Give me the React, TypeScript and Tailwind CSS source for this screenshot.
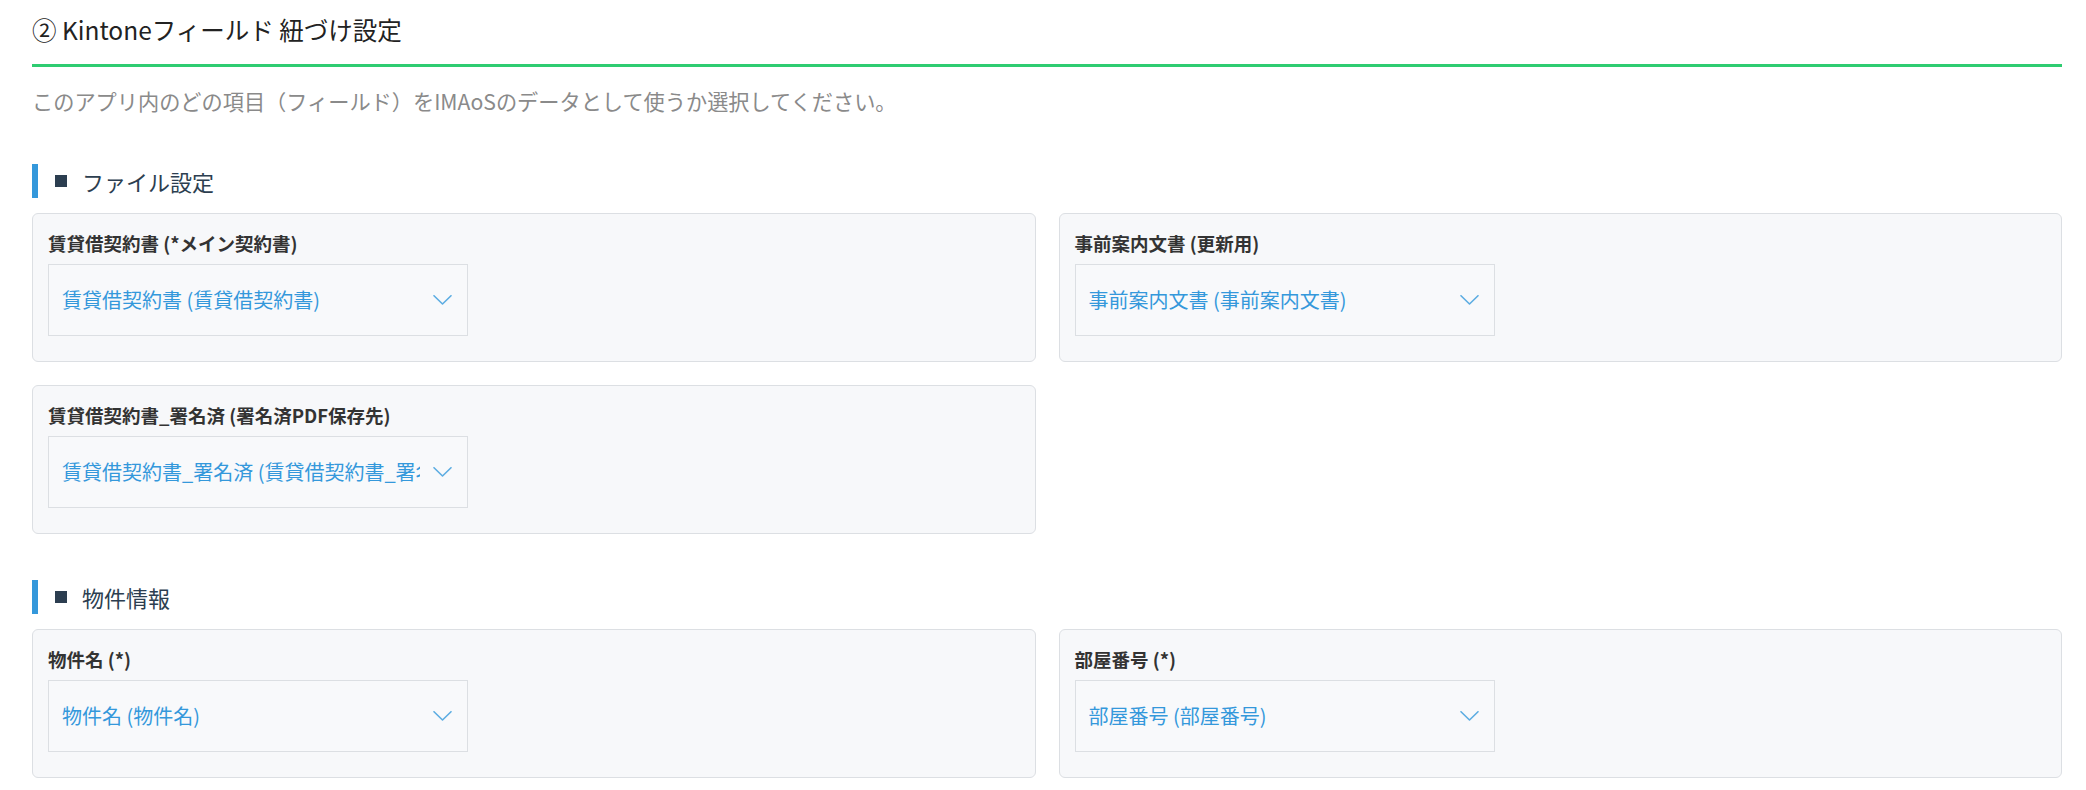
import React from "react";

const FONT = {
  fontFamily: '"Noto Sans CJK JP", "Noto Sans", sans-serif',
};

interface FieldConfig {
  label: string;
  value: string;
}

const fileFields: (FieldConfig | null)[] = [
  { label: "賃貸借契約書 (*メイン契約書)", value: "賃貸借契約書 (賃貸借契約書)" },
  { label: "事前案内文書 (更新用)", value: "事前案内文書 (事前案内文書)" },
  {
    label: "賃貸借契約書_署名済 (署名済PDF保存先)",
    value: "賃貸借契約書_署名済 (賃貸借契約書_署名済)",
  },
];

const propertyFields: FieldConfig[] = [
  { label: "物件名 (*)", value: "物件名 (物件名)" },
  { label: "部屋番号 (*)", value: "部屋番号 (部屋番号)" },
];

const Chevron: React.FC = () => (
  <svg
    width="19"
    height="11"
    viewBox="0 0 19 11"
    fill="none"
    className="absolute right-[15px] top-1/2 -translate-y-1/2"
  >
    <path
      d="M1 1.2 L9.5 9.5 L18 1.2"
      stroke="#5dade2"
      strokeWidth="1.6"
      strokeLinecap="round"
      strokeLinejoin="round"
    />
  </svg>
);

const FieldCard: React.FC<{ field: FieldConfig }> = ({ field }) => (
  <div className="rounded-[6px] border border-[#dcdfe3] bg-[#f7f8fa] px-[15px] pt-[16px] pb-[25px]">
    <div className="mb-[7px] text-[18.5px] font-bold leading-[27px] text-[#333]">
      {field.label}
    </div>
    <div className="relative h-[72px] w-[420px] border border-[#dcdfe3] bg-[#f8f9fb]">
      {/* long values are clipped before the chevron, like a native select */}
      <div className="flex h-full items-center pl-[13px] pr-[47px] text-[20px] text-[#3498db]">
        <span className="overflow-hidden whitespace-nowrap">{field.value}</span>
      </div>
      <Chevron />
    </div>
  </div>
);

const SectionHeader: React.FC<{ title: string; className?: string }> = ({
  title,
  className,
}) => (
  <div
    className={`flex h-[34px] items-center border-l-[6px] border-[#3498db] pl-[17px] ${className ?? ""}`}
  >
    <span className="mr-[15px] block h-[12px] w-[12px] bg-[#2c3e50]" />
    <span className="text-[22px] leading-[34px] text-[#2c3e50]">{title}</span>
  </div>
);

export default function App() {
  return (
    <div className="min-h-screen bg-white pl-[32px] pr-[24px]" style={FONT}>
      {/* page title */}
      <div className="border-b-[3px] border-[#2ecc71] pt-[13px] pb-[18px]">
        <h2 className="text-[24.5px] leading-[33px] text-[#222]">
          ② Kintoneフィールド 紐づけ設定
        </h2>
      </div>
      <p className="mt-[19px] text-[21.2px] leading-[30px] text-[#8a8a8a]">
        このアプリ内のどの項目（フィールド）をIMAoSのデータとして使うか選択してください。
      </p>

      {/* file settings */}
      <SectionHeader title="ファイル設定" className="mt-[48px]" />
      <div className="mt-[15px] grid grid-cols-2 gap-[23px]">
        {fileFields.map((f, i) =>
          f ? <FieldCard key={i} field={f} /> : <div key={i} />
        )}
      </div>

      {/* property info */}
      <SectionHeader title="物件情報" className="mt-[46px]" />
      <div className="mt-[15px] grid grid-cols-2 gap-[23px]">
        {propertyFields.map((f, i) => (
          <FieldCard key={i} field={f} />
        ))}
      </div>
    </div>
  );
}
